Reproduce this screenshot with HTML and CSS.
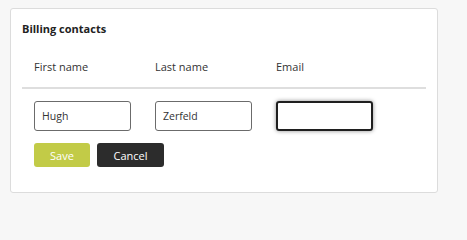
FILE: index.html
```html
<!DOCTYPE html>
<html>
<head>
<meta charset="utf-8">
<link rel="stylesheet" href="styles.css">
</head>
<body>
<section class="card">
  <h2 class="title">Billing contacts</h2>
  <div class="row head">
    <div class="cell">First name</div>
    <div class="cell">Last name</div>
    <div class="cell">Email</div>
  </div>
  <div class="row inputs">
    <div class="cell"><div class="input">Hugh</div></div>
    <div class="cell"><div class="input">Zerfeld</div></div>
    <div class="cell"><div class="input focus"></div></div>
  </div>
  <div class="actions">
    <button class="btn save">Save</button>
    <button class="btn cancel">Cancel</button>
  </div>
</section>
</body>
</html>
```
FILE: styles.css
```css
html, body { margin: 0; padding: 0; }
body {
  background: #f7f7f7;
  font-family: "Open Sans", "Liberation Sans", sans-serif;
  color: #333;
  padding: 8px 29px 0 10px;
  width: 428px;
}
.card {
  box-sizing: border-box;
  width: 428px;
  height: 185px;
  background: #fff;
  border: 1px solid #dcdcdc;
  border-radius: 3px;
  padding: 12px 11px 0 11px;
}
.title {
  margin: 0;
  font-size: 11px;
  font-weight: 700;
  line-height: 16px;
  color: #222;
}
.row { display: flex; }
.cell { width: 121px; box-sizing: border-box; padding-left: 12px; }
.head {
  margin-top: 22px;
  font-size: 11px;
  line-height: 16px;
  padding-bottom: 12px;
  border-bottom: 2px solid #dedede;
}
.inputs { padding-top: 12px; }
.input {
  box-sizing: border-box;
  width: 97px;
  height: 30px;
  border: 1px solid #6b6b6b;
  border-radius: 3px;
  font-size: 10.5px;
  line-height: 28px;
  padding-left: 7px;
  color: #333;
}
.input.focus {
  border: 2px solid #1f1f1f;
  box-shadow: 0 0 4px rgba(0,0,0,0.45);
}
.actions {
  display: flex;
  gap: 7px;
  padding-left: 12px;
  margin-top: 12px;
}
.btn {
  font-family: "Open Sans", "Liberation Sans", sans-serif;
  font-size: 11px;
  height: 24px;
  border: 0;
  border-radius: 3px;
  color: #fff;
  padding: 0;
}
.save { width: 56px; background: #c2cb47; }
.cancel { width: 67px; background: #2c2c2c; }
```
